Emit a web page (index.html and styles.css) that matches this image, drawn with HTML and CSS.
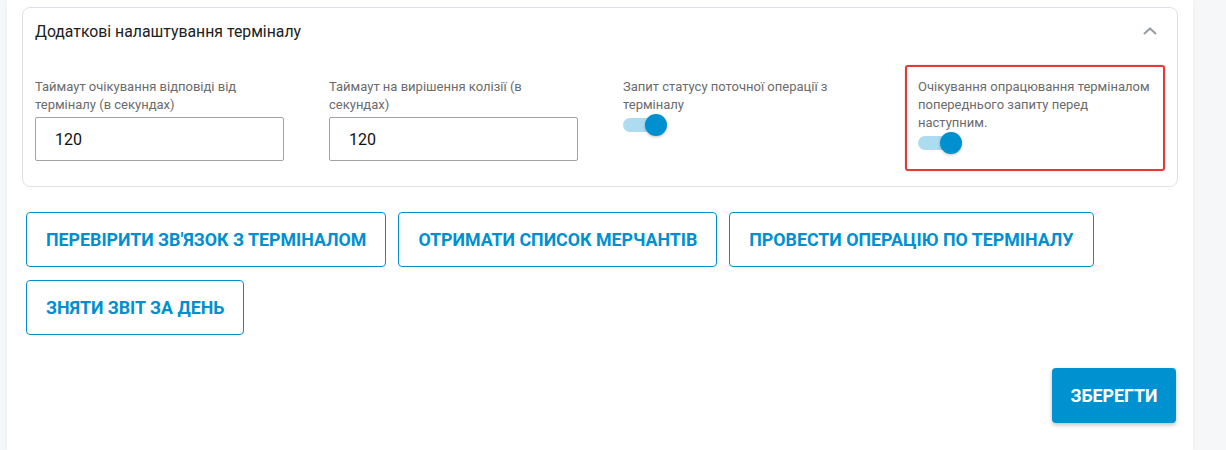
FILE: index.html
```html
<!DOCTYPE html>
<html lang="uk">
  <head>
    <meta charset="UTF-8" />
    <meta name="viewport" content="width=device-width, initial-scale=1.0" />
    <title>Налаштування терміналу</title>
    <link rel="stylesheet" href="styles.css">
  </head>
  <body>
    <main class="panel">
      <section class="settings">
        <div class="settings-header">
          <h3>Додаткові налаштування терміналу</h3>
          <svg class="chevron" width="16" height="10" viewBox="0 0 16 10">
            <path d="M2 8 L8 2.5 L14 8" fill="none" stroke="#9aa0a6" stroke-width="2.2" />
          </svg>
        </div>

        <div class="fields">
          <div class="field">
            <label>Таймаут очікування відповіді від терміналу (в секундах)</label>
            <input type="text" value="120" />
          </div>
          <div class="field">
            <label>Таймаут на вирішення колізії (в секундах)</label>
            <input type="text" value="120" />
          </div>
          <div class="field">
            <label>Запит статусу поточної операції з терміналу</label>
            <div class="switch">
              <span class="track"></span>
              <span class="knob"></span>
            </div>
          </div>
          <div class="field">
            <div class="highlight">
              <label>Очікування опрацювання терміналом попереднього запиту перед наступним.</label>
              <div class="switch">
                <span class="track"></span>
                <span class="knob"></span>
              </div>
            </div>
          </div>
        </div>
      </section>

      <div class="actions">
        <button class="btn-outline">Перевірити зв'язок з терміналом</button>
        <button class="btn-outline">Отримати список мерчантів</button>
        <button class="btn-outline">Провести операцію по терміналу</button>
        <button class="btn-outline">Зняти звіт за день</button>
      </div>

      <div class="footer">
        <button class="btn-save">Зберегти</button>
      </div>
    </main>
  </body>
</html>
```

FILE: styles.css
```css
* {
  box-sizing: border-box;
  margin: 0;
  padding: 0;
}

html,
body {
  height: 100%;
}

body {
  font-family: Roboto, "Noto Sans", Arial, sans-serif;
  background-color: #f6f7f9;
  overflow: hidden;
}

.panel {
  margin-left: 7px;
  width: 1186px;
  height: 100%;
  background-color: white;
  box-shadow: 0 0 4px rgba(0, 0, 0, 0.06);
  padding: 7px 15px 0 15px;
}

.settings {
  border: 1px solid #dde1e6;
  border-radius: 8px;
  padding: 0 12px;
}

.settings-header {
  display: flex;
  justify-content: space-between;
  align-items: center;
  height: 44px;
  padding-top: 2px;
}

.settings-header h3 {
  font-size: 15.8px;
  font-weight: 400;
  color: #202020;
}

.chevron {
  margin-right: 7px;
}

.fields {
  display: grid;
  grid-template-columns: repeat(4, 250px);
  column-gap: 44px;
  padding: 26px 0 15px;
}

.field label {
  display: block;
  font-size: 13px;
  line-height: 18px;
  color: #6b6b6b;
}

.field input {
  display: block;
  width: 249px;
  height: 44px;
  margin-top: 3px;
  border: 1px solid #a3a3a3;
  border-radius: 2px;
  padding: 0 19px;
  font-family: inherit;
  font-size: 16px;
  color: #111;
  outline: none;
}

.switch {
  display: flex;
  align-items: center;
  height: 22px;
}

.track {
  width: 37px;
  height: 14px;
  border-radius: 7px;
  background-color: #addcf0;
}

.knob {
  width: 22px;
  height: 22px;
  border-radius: 50%;
  margin-left: -15px;
  background-color: #008fcf;
  box-shadow: 0 1px 3px rgba(0, 0, 0, 0.25);
}

.highlight {
  margin: -13px 2px 0 -12px;
  border: 2px solid #e53935;
  border-radius: 3px;
  padding: 11px 4px 15px 11px;
  box-shadow: 0 0 2px rgba(0, 0, 0, 0.2);
}

.actions {
  display: flex;
  flex-wrap: wrap;
  gap: 13px 12px;
  margin-top: 25px;
  padding-left: 4px;
}

.btn-outline {
  height: 55px;
  padding: 0 19px;
  background: white;
  border: 1px solid #0090d0;
  border-radius: 4px;
  color: #0090d0;
  font-family: inherit;
  font-size: 17.8px;
  font-weight: 700;
  text-transform: uppercase;
  cursor: pointer;
}

.footer {
  display: flex;
  justify-content: flex-end;
  margin-top: 33px;
  padding-right: 2px;
}

.btn-save {
  width: 124px;
  height: 55px;
  background-color: #0092d0;
  border: none;
  border-radius: 4px;
  color: white;
  font-family: inherit;
  font-size: 17.8px;
  font-weight: 700;
  text-transform: uppercase;
  box-shadow: 0 2px 4px rgba(0, 0, 0, 0.25);
  cursor: pointer;
}
```
